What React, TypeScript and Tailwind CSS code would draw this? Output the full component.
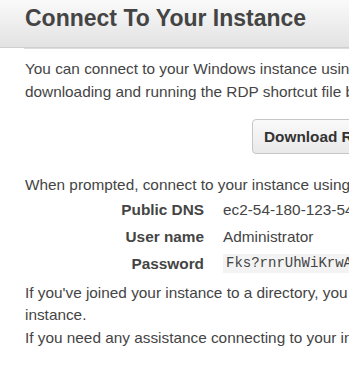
export default function App() {
  return (
    <div className="w-[349px] h-[366px] overflow-hidden bg-white" style={{ fontFamily: '"Liberation Sans", Arial, sans-serif' }}>
      <div className="w-[700px]">
        <div className="h-[48px] bg-gradient-to-b from-[#fafafa] to-[#e2e2e2] border-b border-[#cfcfcf] pl-[25px] pt-[7px]">
          <h1 className="text-[23px] font-bold text-[#444] leading-none">Connect To Your Instance</h1>
        </div>
        <div className="ml-[24px] border-t border-[#dcdcdc]" />
        <div className="pl-[25px] pt-[8px] text-[15.35px] text-[#444] leading-[23px]">
          <p className="whitespace-nowrap">You can connect to your Windows instance using a Remote Desktop client of your choice, and by</p>
          <p className="whitespace-nowrap">downloading and running the RDP shortcut file below:</p>
          <div className="pl-[227px] pt-[16px]">
            <button className="h-[35px] px-[11px] rounded-[4px] border border-[#c6c6c6] bg-gradient-to-b from-[#fafafa] to-[#e9e9e9] text-[15.35px] font-bold text-[#333] whitespace-nowrap">
              Download Remote Desktop File
            </button>
          </div>
          <p className="whitespace-nowrap mt-[19px]">When prompted, connect to your instance using the following details:</p>
          <div className="grid grid-cols-[179px_1fr] gap-x-[19px]">
            <div className="text-right font-bold h-[27px] leading-[27px]">Public DNS</div>
            <div className="h-[27px] leading-[27px] whitespace-nowrap">ec2-54-180-123-54.ap-northeast-2.compute.amazonaws.com</div>
            <div className="text-right font-bold h-[27px] leading-[27px]">User name</div>
            <div className="h-[27px] leading-[27px]">Administrator</div>
            <div className="text-right font-bold h-[27px] leading-[27px]">Password</div>
            <div className="h-[27px] flex items-center">
              <span className="bg-[#f3f3f3] px-[3px] h-[19px] leading-[19px] text-[14px] text-[#444] whitespace-nowrap" style={{ fontFamily: '"Liberation Mono", "Courier New", monospace' }}>Fks?rnrUhWiKrwAbcDxYz</span>
            </div>
          </div>
          <p className="whitespace-nowrap leading-[22px] mt-[5px]">If you've joined your instance to a directory, you can use your directory credentials to connect to your</p>
          <p className="leading-[22px]">instance.</p>
          <p className="whitespace-nowrap leading-[24px]">If you need any assistance connecting to your instance, please see our connection documentation.</p>
        </div>
      </div>
    </div>
  );
}
